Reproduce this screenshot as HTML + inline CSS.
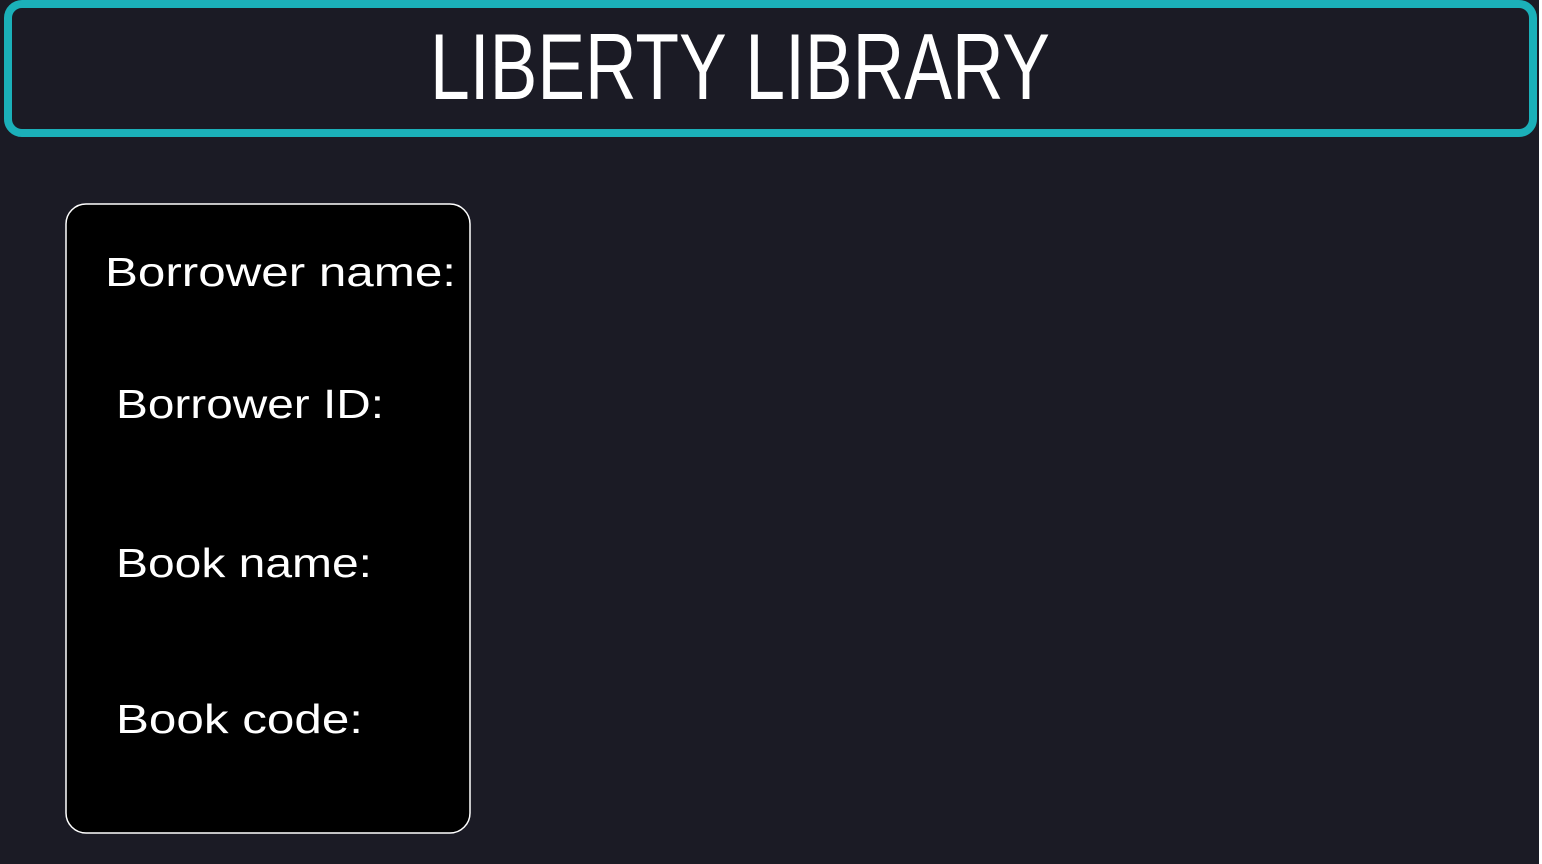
<!DOCTYPE html>
<html><head><style>
html,body{margin:0;padding:0;background:#1b1b25;width:1542px;height:864px;overflow:hidden}
svg{display:block}
</style></head><body>
<svg width="1542" height="864" xmlns="http://www.w3.org/2000/svg" font-family="Liberation Sans, sans-serif">
<rect x="0" y="0" width="1542" height="864" fill="#1b1b25"/>
<rect x="1539" y="0" width="3" height="864" fill="#ffffff"/>
<rect x="8" y="4" width="1525" height="129" rx="14" fill="#1b1b25" stroke="#1bb0b9" stroke-width="8"/>
<text x="430" y="99" font-size="94" fill="#fff" textLength="620" lengthAdjust="spacingAndGlyphs">LIBERTY  LIBRARY</text>
<rect x="66" y="204" width="404" height="629" rx="20" fill="#000" stroke="#fff" stroke-width="1.5"/>
<g fill="#fff" font-size="41">
<text x="105" y="286" textLength="351" lengthAdjust="spacingAndGlyphs">Borrower  name:</text>
<text x="116" y="418" textLength="268" lengthAdjust="spacingAndGlyphs">Borrower  ID:</text>
<text x="116" y="577" textLength="256" lengthAdjust="spacingAndGlyphs">Book  name:</text>
<text x="116" y="733" textLength="247" lengthAdjust="spacingAndGlyphs">Book  code:</text>
</g>
</svg>
</body></html>
